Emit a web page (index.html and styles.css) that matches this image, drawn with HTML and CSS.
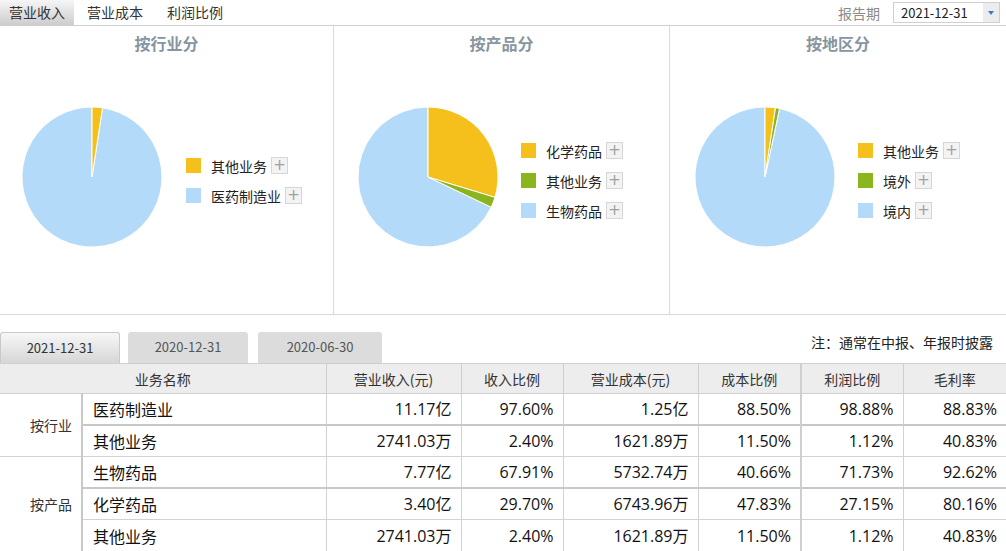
FILE: index.html
```html
<!DOCTYPE html>
<html lang="zh">
<head>
<meta charset="utf-8">
<title>营业收入</title>
<link rel="stylesheet" href="styles.css">
</head>
<body>
<div class="topbar">
  <div class="tabs">
    <span class="tab active">营业收入</span>
    <span class="tab">营业成本</span>
    <span class="tab tab3">利润比例</span>
  </div>
  <div class="period">
    <span class="period-label">报告期</span>
    <div class="select"><span class="select-val">2021-12-31</span><span class="select-arrow"><i></i></span></div>
  </div>
</div>

<div class="charts">
  <div class="panel p1">
    <div class="ptitle">按行业分</div>
    <div class="pbody">
      <svg class="pie" width="150" height="150" viewBox="0 0 150 150">
        <path d="M75,75 L85.52,5.80 A70,70 0 1 1 75,5 Z" fill="#b3dbf9" stroke="#fff" stroke-width="1"/>
        <path d="M75,75 L75,5 A70,70 0 0 1 85.52,5.80 Z" fill="#f6c01c" stroke="#fff" stroke-width="1"/>
      </svg>
      <ul class="legend">
        <li><span class="sw yellow"></span>其他业务<span class="plus">+</span></li>
        <li><span class="sw blue"></span>医药制造业<span class="plus">+</span></li>
      </ul>
    </div>
  </div>
  <div class="panel p2">
    <div class="ptitle">按产品分</div>
    <div class="pbody">
      <svg class="pie" width="150" height="150" viewBox="0 0 150 150">
        <path d="M75,75 L138.15,105.20 A70,70 0 1 1 75,5 Z" fill="#b3dbf9" stroke="#fff" stroke-width="1"/>
        <path d="M75,75 L75,5 A70,70 0 0 1 141.97,95.37 Z" fill="#f6c01c" stroke="#fff" stroke-width="1"/>
        <path d="M75,75 L141.97,95.37 A70,70 0 0 1 138.15,105.20 Z" fill="#8ab51c" stroke="#fff" stroke-width="1"/>
      </svg>
      <ul class="legend">
        <li><span class="sw yellow"></span>化学药品<span class="plus">+</span></li>
        <li><span class="sw green"></span>其他业务<span class="plus">+</span></li>
        <li><span class="sw blue"></span>生物药品<span class="plus">+</span></li>
      </ul>
    </div>
  </div>
  <div class="panel p3">
    <div class="ptitle">按地区分</div>
    <div class="pbody">
      <svg class="pie" width="150" height="150" viewBox="0 0 150 150">
        <path d="M75,75 L89.55,6.53 A70,70 0 1 1 75,5 Z" fill="#b3dbf9" stroke="#fff" stroke-width="1"/>
        <path d="M75,75 L75,5 A70,70 0 0 1 85.52,5.80 Z" fill="#f6c01c" stroke="#fff" stroke-width="1"/>
        <path d="M75,75 L85.52,5.80 A70,70 0 0 1 89.55,6.53 Z" fill="#8ab51c" stroke="#fff" stroke-width="1"/>
      </svg>
      <ul class="legend">
        <li><span class="sw yellow"></span>其他业务<span class="plus">+</span></li>
        <li><span class="sw green"></span>境外<span class="plus">+</span></li>
        <li><span class="sw blue"></span>境内<span class="plus">+</span></li>
      </ul>
    </div>
  </div>
</div>

<div class="datebar">
  <div class="dtabs">
    <span class="dtab active">2021-12-31</span>
    <span class="dtab d2">2020-12-31</span>
    <span class="dtab d3">2020-06-30</span>
  </div>
  <div class="note">注：通常在中报、年报时披露</div>
</div>

<table class="data">
  <colgroup>
    <col class="c0"><col class="c1"><col class="c2"><col class="c3"><col class="c4"><col class="c5"><col class="c6"><col class="c7">
  </colgroup>
  <thead>
    <tr>
      <th colspan="2">业务名称</th>
      <th>营业收入(元)</th>
      <th>收入比例</th>
      <th>营业成本(元)</th>
      <th>成本比例</th>
      <th class="thick">利润比例</th>
      <th>毛利率</th>
    </tr>
  </thead>
  <tbody>
    <tr>
      <td class="cat" rowspan="2">按行业</td>
      <td class="name">医药制造业</td>
      <td class="num">11.17亿</td><td class="num">97.60%</td><td class="num">1.25亿</td><td class="num">88.50%</td><td class="num thick">98.88%</td><td class="num">88.83%</td>
    </tr>
    <tr class="sub">
      <td class="name">其他业务</td>
      <td class="num">2741.03万</td><td class="num">2.40%</td><td class="num">1621.89万</td><td class="num">11.50%</td><td class="num thick">1.12%</td><td class="num">40.83%</td>
    </tr>
    <tr>
      <td class="cat" rowspan="3">按产品</td>
      <td class="name">生物药品</td>
      <td class="num">7.77亿</td><td class="num">67.91%</td><td class="num">5732.74万</td><td class="num">40.66%</td><td class="num thick">71.73%</td><td class="num">92.62%</td>
    </tr>
    <tr class="sub">
      <td class="name">化学药品</td>
      <td class="num">3.40亿</td><td class="num">29.70%</td><td class="num">6743.96万</td><td class="num">47.83%</td><td class="num thick">27.15%</td><td class="num">80.16%</td>
    </tr>
    <tr class="sub2">
      <td class="name">其他业务</td>
      <td class="num">2741.03万</td><td class="num">2.40%</td><td class="num">1621.89万</td><td class="num">11.50%</td><td class="num thick">1.12%</td><td class="num">40.83%</td>
    </tr>
  </tbody>
</table>
</body>
</html>
```
FILE: styles.css
```css
* { box-sizing: border-box; }
html, body { margin: 0; padding: 0; background: #fff; }
body {
  width: 1006px;
  height: 551px;
  overflow: hidden;
  font-family: "Noto Sans CJK SC", "Open Sans", sans-serif;
  font-size: 14px;
  color: #222;
}

/* top bar */
.topbar {
  height: 26px;
  display: flex;
  justify-content: space-between;
  border-bottom: 1px solid #cfcfcf;
}
.tabs { display: flex; gap: 4px; }
.tab {
  display: block;
  height: 25px;
  line-height: 24px;
  padding: 0 9px;
  color: #333;
}
.tab.active { background: linear-gradient(#f6f6f6, #cdcdcd); }
.tab3 { margin-left: 2px; }
.period { display: flex; align-items: center; padding-right: 6px; gap: 13px; }
.period-label { color: #8a8a8a; }
.select {
  width: 107px;
  height: 21px;
  border: 1px solid #cfcfcf;
  display: flex;
  justify-content: space-between;
  background: #fff;
}
.select-val { font-size: 13px; line-height: 19px; padding-left: 7px; color: #222; }
.select-arrow {
  width: 16px;
  background: #ececec;
  display: flex;
  align-items: center;
  justify-content: center;
}
.select-arrow i {
  width: 0; height: 0;
  border-left: 3px solid transparent;
  border-right: 3px solid transparent;
  border-top: 4px solid #3a78c8;
}

/* charts */
.charts {
  display: grid;
  grid-template-columns: 334px 336px 1fr;
  height: 289px;
  border-bottom: 1px solid #d9d9d9;
}
.panel { border-right: 1px solid #d9d9d9; }
.panel.p3 { border-right: none; }
.ptitle {
  margin-top: 6px;
  height: 22px;
  line-height: 22px;
  text-align: center;
  font-size: 16px;
  font-weight: bold;
  color: #8795a0;
}
.pbody {
  margin-top: 48px;
  display: flex;
  align-items: center;
}
.p1 .pbody { padding-left: 17px; }
.p2 .pbody { padding-left: 19px; }
.p3 .pbody { padding-left: 20px; }
.pie { display: block; flex: none; }
.legend {
  list-style: none;
  margin: 7px 0 0 18px;
  padding: 0;
}
.p1 .legend { margin-left: 19px; }
.legend li {
  display: flex;
  align-items: center;
  height: 30px;
  color: #222;
}
.sw { width: 15px; height: 15px; margin-right: 10px; flex: none; }
.sw.yellow { background: #f6c01c; }
.sw.green { background: #8ab51c; }
.sw.blue { background: #b3dbf9; }
.plus {
  width: 17px;
  height: 17px;
  margin-left: 4px;
  border: 1px solid #d6d6d6;
  background: #f3f3f3;
  color: #a0a0a0;
  font-family: "DejaVu Sans", sans-serif;
  font-size: 15px;
  line-height: 14px;
  text-align: center;
}

/* date tabs */
.datebar {
  margin-top: 17px;
  display: flex;
  justify-content: space-between;
  height: 31px;
}
.dtabs { display: flex; align-items: flex-end; }
.dtab {
  width: 120px;
  height: 31px;
  line-height: 30px;
  text-align: center;
  border-radius: 3px 3px 0 0;
  background: #dcdcdc;
  color: #555;
  font-size: 13px;
}
.dtab.active {
  background: linear-gradient(#f7f7f7, #d6d6d6);
  border: 1px solid #c9c9c9;
  border-bottom: none;
  color: #333;
}
.dtab.d2 { margin-left: 8px; }
.dtab.d3 { margin-left: 10px; width: 124px; }
.note {
  padding-right: 13px;
  line-height: 20px;
  color: #222;
}

/* table */
.data {
  width: 1006px;
  border-collapse: collapse;
  table-layout: fixed;
}
.c0 { width: 82px; }
.c1 { width: 244px; }
.c2 { width: 135px; }
.c3 { width: 102px; }
.c4 { width: 135px; }
.c5 { width: 103px; }
.c6 { width: 102px; }
.c7 { width: 103px; }
.data th {
  height: 30px;
  background: #ededed;
  font-weight: normal;
  color: #333;
  border: 1px solid #cfcfcf;
  padding: 0;
  font-size: 14px;
  line-height: 20px;
}
.data th:first-child { border-left: none; }
.data th:last-child { border-right: none; }
.data td {
  height: 31.6px;
  border: 1px solid #d2d2d2;
  padding: 0 8px;
  font-size: 16px;
  line-height: 20px;
  color: #111;
  white-space: nowrap;
}
.data td:last-child { border-right: none; }
.data td.cat {
  text-align: right;
  padding-right: 9px;
  font-size: 14px;
  color: #333;
  border-left: none;
  border-right: 2px solid #c8c8c8;
}
.data td.name { padding-left: 10px; }
.data td.num {
  text-align: right;
  font-family: "Open Sans", "Noto Sans CJK SC", sans-serif;
  padding-right: 9px;
}
.data .thick { border-left: 2px solid #cfcfcf; }
.data tr.sub td { border-top: 2px solid #c8c8c8; }
.data tr.sub2 td { border-top: 1px solid #cfcfcf; }
```
